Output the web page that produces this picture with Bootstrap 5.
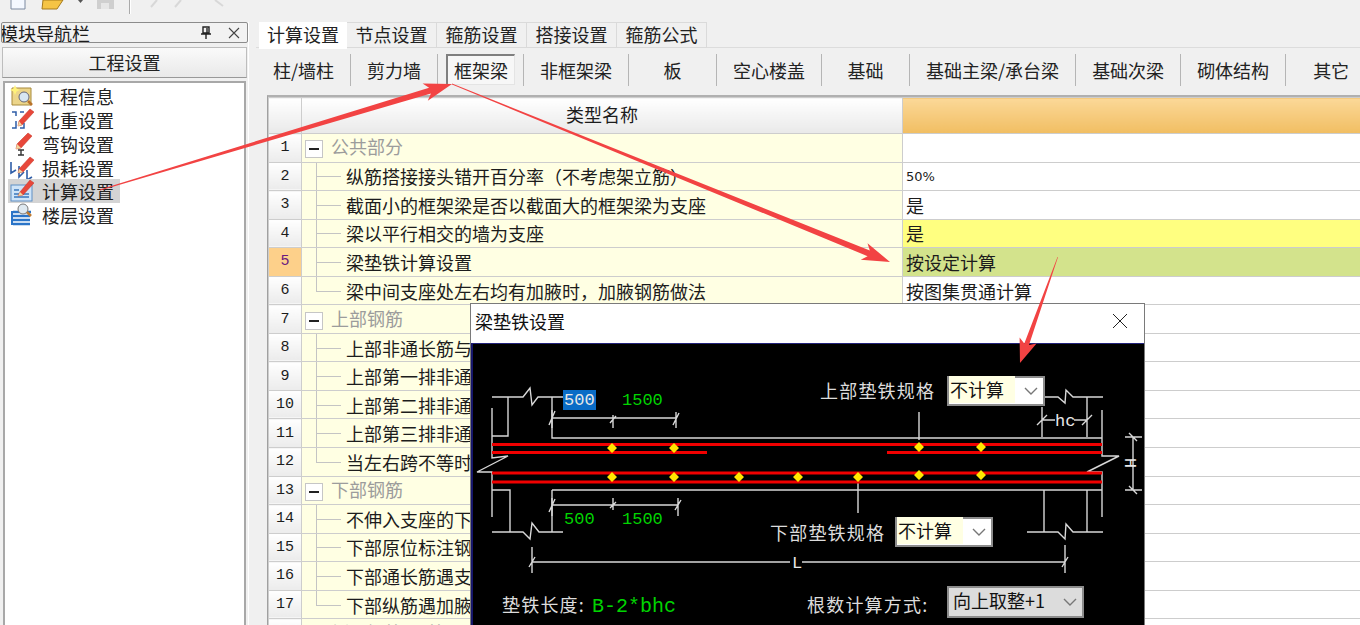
<!DOCTYPE html>
<html lang="zh-CN">
<head>
<meta charset="utf-8">
<title>梁垫铁设置</title>
<link href="https://cdn.jsdelivr.net/npm/bootstrap@5.3.0/dist/css/bootstrap.min.css" rel="stylesheet">
<style>
html,body{height:625px;overflow:hidden}
body{background:#f0f0f0;color:#1c1c1c;font-family:"Noto Sans CJK SC","Liberation Sans",sans-serif;font-size:18px;line-height:1;position:relative;width:1360px}
.topbar{height:22px;padding-left:10px;gap:13px;overflow:hidden}
.topsep{width:1px;height:14px;background:#aaa;box-shadow:1px 0 0 #fff}
.workarea{height:603px;overflow:hidden}
.sidepane{width:248px;flex:none}
.paneltitle{height:21px;margin:0 0 4px 1px;border:1px solid #8c8c8c;border-radius:2px;background:#f2f2f2;width:247px;padding-right:7px;font-size:18px;overflow:hidden;white-space:nowrap}
.paneltext{margin-left:-2px}
.panelbtn{height:31px;margin:0 0 3px 2px;width:245px;border:1px solid #bdbdbd;border-bottom-color:#999;border-radius:0;background:linear-gradient(#fafafa,#e9e9e9);font-size:18px;color:#222;padding:0}
.modulelist{height:544px;margin-left:3px;width:243px;background:#fff;border:2px solid #a8a8a8;border-bottom:0;padding-top:1px;border-radius:0}
.moduleitem{height:24px;border:0;padding:0 0 0 2px;background:transparent;margin-left:3px;width:112px;gap:8px;font-size:18px;color:#222;border-radius:0}
.moduleitem.active{background:#d4d4d4;color:#222}
.moduleitem svg{flex:none}
.rightpane{width:1112px;padding-left:7px;border-left:1px solid #fff}
.tabstrip{height:26px;border-bottom:1px solid #dcdcdc;gap:0;padding-left:3px;flex-wrap:nowrap;--bs-nav-tabs-border-width:0}
.tabstrip .nav-link{height:26px;width:90px;padding:0 0 2px;margin:0;border:1px solid #dadada;border-left:0;border-radius:0;color:#222;background:#f0f0f0;font-size:18px;display:flex;align-items:center;justify-content:center}
.tabstrip .nav-link.active{width:88px;height:29px;margin-top:-2px;background:#fff;border:0;color:#222;margin-bottom:-1px}
.subtools{height:38px;margin-top:2px;padding-left:1px;overflow:hidden}
.subtools .btn{flex:none;height:32px;min-width:88px;padding:0 16px 1px;background:transparent;border:0;border-right:1px solid #b5b5b5;border-radius:0;font-size:18px;line-height:1;color:#222;white-space:nowrap;margin-top:4px}
.subtools .btn.tight{min-width:87px}
.subtools .btn.pressed{margin:4px 8px 0 8px;min-width:69px;padding:0;width:69px;height:31px;background:#f7f7f7;border:1px solid #e4e4e4;border-top:2px solid #7f7f7f;border-left:2px solid #7f7f7f}
.subtools .spacer{flex:none;width:1px;height:32px;background:#b5b5b5;margin-top:4px}
.subtools .btn:last-child{border-right:0;min-width:90px}
.gridwrap{margin-top:7px;margin-left:11px;border-left:1px solid #a0a0a0;border-top:2px solid #b0b0b0;overflow:hidden;height:530px}
.paramgrid{table-layout:fixed;width:1093px;margin:0;border-collapse:collapse}
.colnum{width:33px}
.colname{width:601px}
.paramgrid td,.paramgrid th{padding:0;border:1px solid #cdcdcd;box-shadow:none;font-weight:400;vertical-align:middle;color:#1c1c1c;white-space:nowrap;overflow:hidden}
.paramgrid tr{height:28.56px}
.paramgrid tr.headrow{height:36px}
.headrow th{background:linear-gradient(#fff,#e9e9e9);text-align:center;font-size:18px;padding-bottom:3px}
.headrow th.valhead{background:linear-gradient(#fbd898,#f1be62)}
.paramgrid td.rownum{background:linear-gradient(#fff,#ebebeb);text-align:center;font-family:"Liberation Mono",monospace;font-size:15px}
.paramgrid td.namecell{background:#ffffe3;position:relative;padding-left:44px}
.paramgrid td.groupcell{padding-left:3px;color:#9c9c9c}
.paramgrid td.valcell{background:#fff;padding-left:3px}
.paramgrid td.valsmall{font-family:"DejaVu Sans",sans-serif;font-size:13px}
.paramgrid td.valyellow{background:#ffff80}
.paramgrid td.valgreen{background:#d3e38c}
.paramgrid tr.currow td.rownum{background:#fdd08a;color:#6a1a80}
.expander{display:inline-flex;width:18px;height:18px;border:1px solid #c6c6c6;background:#fff;align-items:center;justify-content:center;margin-right:8px;vertical-align:middle}
.expander i{display:block;width:10px;height:2px;background:#222}
.leaf::before{content:"";position:absolute;left:14px;top:-1px;bottom:-1px;width:1px;background:#c4c4c4}
.leaf::after{content:"";position:absolute;left:14px;top:50%;width:25px;height:1px;background:#c4c4c4}
.leaf.lastleaf::before{bottom:50%}
.dialogwin{position:absolute;left:470px;top:303px;width:675px;height:322px;background:#fff;border:1px solid #7a7a7a;border-bottom:0;z-index:5;overflow:hidden}
.dlgtitle{height:39px;padding:0 16px 5px 4px;font-size:18px;color:#111}
.dlgbody{position:relative;height:282px;background:#000;border-top:1px solid #22227a;border-left:2px solid #16166a;overflow:hidden}
.diagram{position:absolute;left:0;top:0;display:block}
.diagram text{font-family:"Liberation Mono",monospace;font-size:17px;fill:#00d400}
.diagram text.cjk{font-family:"Noto Sans CJK SC",sans-serif;font-size:18px;fill:#dcdcdc;letter-spacing:1.2px}
.diagram text.wht{fill:#e8e8e8}
.diagram text.formula{font-size:20px}
.pickbox{position:absolute;background:#fff;border:2px solid #8c8c8c;color:#111;font-size:18px;display:flex;align-items:center;justify-content:space-between;padding:0 5px 3px 0}
.pickbox span{background:#ffffe3;padding:2px 11px 2px 1px;line-height:1.25}
.pickbox svg{margin-top:3px}
.pick1{left:474px;top:32px;width:98px;height:30px}
.pick2{left:422px;top:173px;width:98px;height:30px}
.pick3{left:474px;top:242px;width:137px;height:32px;background:#dcdcdc;padding-left:4px}
.pick3 span{background:transparent;padding:0}
.arrows{position:absolute;left:0;top:0;z-index:9;pointer-events:none}
</style>
</head>
<body>
<div class="topbar d-flex align-items-start">
  <svg width="18" height="10"><path d="M1 0V9H15V0" fill="#f4f8ff" stroke="#7d8aa0"/></svg>
  <svg width="24" height="11"><path d="M2 0H22L16 9H1Z" fill="#f5c445" stroke="#a67a1c"/></svg>
  <svg width="5" height="4"><path d="M0 0H5L2.500 3Z" fill="#555"/></svg>
  <svg width="20" height="10"><rect x="1" y="0" width="17" height="9" fill="#cfcfcf"/><rect x="5" y="3" width="8" height="6" fill="#e6e6e6"/></svg>
  <div class="topsep"></div>
  <svg width="100" height="8"><path d="M8 7 14 0M38 0 32 7M72 0 80 6" stroke="#d8d8d8" stroke-width="2" fill="none"/></svg>
</div>
<div class="workarea d-flex">
  <aside class="sidepane">
    <div class="paneltitle d-flex align-items-center justify-content-between">
      <span class="paneltext">模块导航栏</span>
      <span class="d-flex align-items-center gap-3">
        <svg width="12" height="14" viewBox="0 0 12 14"><path d="M3 1H9V7H3ZM1 8H11M6 8V13M7 2V7" stroke="#222" stroke-width="1.400" fill="none"/></svg>
        <svg width="12" height="12" viewBox="0 0 12 12"><path d="M1 1 11 11M11 1 1 11" stroke="#444" stroke-width="1.100"/></svg>
      </span>
    </div>
    <button class="btn panelbtn d-block" type="button">工程设置</button>
    <div class="list-group modulelist">
      <a class="list-group-item moduleitem d-flex align-items-center">
        <svg width="24" height="24" viewBox="0 0 24 24"><path d="M2 4H21V21H2Z" fill="#ecd58a" stroke="#a88a3c"/><path d="M5 1 6.500 4.500 10 6 6.500 7.500 5 11 3.500 7.500 0 6 3.500 4.500Z" fill="#fff27a"/><circle cx="14" cy="13" r="5" fill="#d7e6f2" stroke="#667"/><path d="M18 17 22 21" stroke="#b9722a" stroke-width="2.500"/></svg>工程信息</a>
      <a class="list-group-item moduleitem d-flex align-items-center">
        <svg width="24" height="24" viewBox="0 0 24 24"><path d="M2 4H6V8M6 13V20H2M14 4H10M10 20H14V15" fill="none" stroke="#2f5ea8" stroke-width="1.500"/><path d="M9 13 20 1 24 4 12 17 8 18Z" fill="#e8473a" stroke="#c33020" stroke-width=".5"/><path d="M9 13 12 17 8 18Z" fill="#f2d9a0"/></svg>比重设置</a>
      <a class="list-group-item moduleitem d-flex align-items-center">
        <svg width="24" height="24" viewBox="0 0 24 24"><path d="M8 18H14M11 18V23M8 23H14" fill="none" stroke="#333" stroke-width="1.400"/><path d="M7 12 18 1 22 4 11 16 6 17Z" fill="#e8473a" stroke="#c33020" stroke-width=".5"/><path d="M7 12 11 16 6 17Z" fill="#f2d9a0"/></svg>弯钩设置</a>
      <a class="list-group-item moduleitem d-flex align-items-center">
        <svg width="24" height="24" viewBox="0 0 24 24"><path d="M1 6V17L6 14M9 10V21L14 16M17 14V24L22 21" fill="none" stroke="#2f5ea8" stroke-width="1.600"/><path d="M9 13 20 1 24 4 13 16 8 17Z" fill="#e8473a" stroke="#c33020" stroke-width=".5"/><path d="M9 13 13 16 8 17Z" fill="#f2d9a0"/></svg>损耗设置</a>
      <a class="list-group-item moduleitem active d-flex align-items-center">
        <svg width="24" height="24" viewBox="0 0 24 24"><rect x="1" y="6" width="21" height="16" fill="#cfe4f8" stroke="#5f8fc4"/><path d="M4 11H9M4 15H19M4 18H19" stroke="#3b77bb" stroke-width="1.300"/><path d="M10 13 20 1 24 4 13 16 8 17Z" fill="#e8473a" stroke="#c33020" stroke-width=".5"/><path d="M10 13 13 16 8 17Z" fill="#f2d9a0"/></svg>计算设置</a>
      <a class="list-group-item moduleitem d-flex align-items-center">
        <svg width="24" height="24" viewBox="0 0 24 24"><path d="M3 9H21M2 13H20M2 17H20M3 21H20" stroke="#2a74c8" stroke-width="2.600"/><path d="M2 8V22" stroke="#2a74c8" stroke-width="2"/><circle cx="13" cy="6" r="5" fill="#dfe9f0" stroke="#777"/><path d="M17 9 21 13" stroke="#c07a30" stroke-width="2.500"/></svg>楼层设置</a>
    </div>
  </aside>
  <section class="rightpane">
    <ul class="nav nav-tabs tabstrip">
      <li class="nav-item"><a class="nav-link active">计算设置</a></li>
      <li class="nav-item"><a class="nav-link">节点设置</a></li>
      <li class="nav-item"><a class="nav-link">箍筋设置</a></li>
      <li class="nav-item"><a class="nav-link">搭接设置</a></li>
      <li class="nav-item"><a class="nav-link">箍筋公式</a></li>
    </ul>
    <div class="subtools d-flex align-items-start">
      <button class="btn" type="button">柱/墙柱</button>
      <button class="btn tight" type="button">剪力墙</button>
      <button class="btn pressed" type="button">框架梁</button>
      <div class="spacer"></div>
      <button class="btn" type="button">非框架梁</button>
      <button class="btn" type="button">板</button>
      <button class="btn" type="button">空心楼盖</button>
      <button class="btn" type="button">基础</button>
      <button class="btn" type="button">基础主梁/承台梁</button>
      <button class="btn" type="button">基础次梁</button>
      <button class="btn" type="button">砌体结构</button>
      <button class="btn" type="button">其它</button>
    </div>
    <div class="gridwrap">
      <table class="table paramgrid">
        <colgroup><col class="colnum"><col class="colname"><col></colgroup>
        <tr class="headrow"><th></th><th>类型名称</th><th class="valhead"></th></tr>
        <tr><td class="rownum">1</td><td class="namecell groupcell"><span class="expander"><i></i></span>公共部分</td><td class="valcell"></td></tr>
        <tr><td class="rownum">2</td><td class="namecell leaf">纵筋搭接接头错开百分率（不考虑架立筋）</td><td class="valcell valsmall">50%</td></tr>
        <tr><td class="rownum">3</td><td class="namecell leaf">截面小的框架梁是否以截面大的框架梁为支座</td><td class="valcell">是</td></tr>
        <tr><td class="rownum">4</td><td class="namecell leaf">梁以平行相交的墙为支座</td><td class="valcell valyellow">是</td></tr>
        <tr class="currow"><td class="rownum">5</td><td class="namecell leaf">梁垫铁计算设置</td><td class="valcell valgreen">按设定计算</td></tr>
        <tr><td class="rownum">6</td><td class="namecell leaf lastleaf">梁中间支座处左右均有加腋时，加腋钢筋做法</td><td class="valcell">按图集贯通计算</td></tr>
        <tr><td class="rownum">7</td><td class="namecell groupcell"><span class="expander"><i></i></span>上部钢筋</td><td class="valcell"></td></tr>
        <tr><td class="rownum">8</td><td class="namecell leaf">上部非通长筋与架立钢筋的搭接长度</td><td class="valcell"></td></tr>
        <tr><td class="rownum">9</td><td class="namecell leaf">上部第一排非通长筋伸出长度</td><td class="valcell"></td></tr>
        <tr><td class="rownum">10</td><td class="namecell leaf">上部第二排非通长筋伸出长度</td><td class="valcell"></td></tr>
        <tr><td class="rownum">11</td><td class="namecell leaf">上部第三排非通长筋伸出长度</td><td class="valcell"></td></tr>
        <tr><td class="rownum">12</td><td class="namecell leaf lastleaf">当左右跨不等时，伸入小跨内的长度</td><td class="valcell"></td></tr>
        <tr><td class="rownum">13</td><td class="namecell groupcell"><span class="expander"><i></i></span>下部钢筋</td><td class="valcell"></td></tr>
        <tr><td class="rownum">14</td><td class="namecell leaf">不伸入支座的下部钢筋距支座边的距离</td><td class="valcell"></td></tr>
        <tr><td class="rownum">15</td><td class="namecell leaf">下部原位标注钢筋做法</td><td class="valcell"></td></tr>
        <tr><td class="rownum">16</td><td class="namecell leaf">下部通长筋遇支座做法</td><td class="valcell"></td></tr>
        <tr><td class="rownum">17</td><td class="namecell leaf lastleaf">下部纵筋遇加腋做法</td><td class="valcell"></td></tr>
        <tr><td class="rownum">18</td><td class="namecell groupcell"><span class="expander"><i></i></span>侧面钢筋/吊筋</td><td class="valcell"></td></tr>
      </table>
    </div>
  </section>
</div>

<div class="dialogwin">
  <div class="dlgtitle d-flex align-items-center justify-content-between">
    <span>梁垫铁设置</span>
    <svg width="16" height="16" viewBox="0 0 16 16"><path d="M1 1 15 15M15 1 1 15" stroke="#222" stroke-width="1"/></svg>
  </div>
  <div class="dlgbody">
    <svg class="diagram" width="672" height="282" viewBox="473 344 672 282">
      <g fill="none" stroke="#d8d8d8" stroke-width="1.400">
        <path d="M492 397H523L530 388 532 405 538 397H564M508 397V436H492M492 408V458L508 456 477 472H492V517"/>
        <path d="M552 397V438H1102M552 490H1102M492 490H510V532M552 490V532M492 532H523L530 539 532 523 539 532H563M510 532H492"/>
        <path d="M552 418H676M552 410V428M613 415V428M676 412V428M549 425 555 411M610 423 616 416M673 425 679 413"/>
        <path d="M552 505H678M552 498V516M613 498V510M678 498V516M549 512 555 499M610 508 616 502M675 510 681 500"/>
        <path d="M532 562H790M802 562H1065M532 547V573M1065 545V573M529 567 535 557M1062 567 1068 557"/>
        <path d="M919 412V440M858 480V513"/>
        <path d="M1044 397H1058L1065 403 1066 390 1073 397H1103M1087 397V437M1042 407V437M1042 420H1055M1074 420H1087M1037 425 1047 415M1082 425 1092 415"/>
        <path d="M1102 410V456H1119L1087 472H1102V517M1044 490V532M1087 490V532M1027 532H1058L1065 539 1066 524 1073 532H1103"/>
        <path d="M1133 437V490M1125 437H1142M1125 490H1142M1129 433 1137 441M1129 486 1137 494"/>
      </g>
      <g stroke="#f00000" stroke-width="3">
        <path d="M492 444.500H1102M492 452.500H707M887 452.500H1102M492 473H1102M492 482H1102"/>
      </g>
      <g fill="#ffe600">
        <path d="M612 443 617 448 612 453 607 448ZM674 443 679 448 674 453 669 448ZM919 442 924 447 919 452 914 447ZM981 442 986 447 981 452 976 447Z"/>
        <path d="M612 472 617 477 612 482 607 477ZM674 472 679 477 674 482 669 477ZM739 472 744 477 739 482 734 477ZM798 472 803 477 798 482 793 477ZM858 472 863 477 858 482 853 477ZM919 470 924 475 919 480 914 475ZM981 470 986 475 981 480 976 475Z"/>
      </g>
      <rect x="563" y="390" width="33" height="20" fill="#0a6cc6"/>
      <text class="wht" x="564" y="405">500</text>
      <text x="622" y="405">1500</text>
      <text x="564" y="524">500</text>
      <text x="622" y="524">1500</text>
      <text class="wht" x="792" y="568">L</text>
      <text class="wht" x="1055" y="426">hc</text>
      <text class="wht" transform="translate(1136 468) rotate(-90)">H</text>
      <text class="cjk" x="820" y="398">上部垫铁规格</text>
      <text class="cjk" x="770" y="540">下部垫铁规格</text>
      <text class="cjk" x="502" y="612">垫铁长度:</text>
      <text class="formula" x="592" y="612">B-2*bhc</text>
      <text class="cjk" x="807" y="612">根数计算方式:</text>
    </svg>
    <div class="pickbox pick1"><span>不计算</span><svg width="14" height="9" viewBox="0 0 14 9"><path d="M1 1 7 7 13 1" fill="none" stroke="#777" stroke-width="1.400"/></svg></div>
    <div class="pickbox pick2"><span>不计算</span><svg width="14" height="9" viewBox="0 0 14 9"><path d="M1 1 7 7 13 1" fill="none" stroke="#777" stroke-width="1.400"/></svg></div>
    <div class="pickbox pick3"><span>向上取整+1</span><svg width="14" height="9" viewBox="0 0 14 9"><path d="M1 1 7 7 13 1" fill="none" stroke="#777" stroke-width="1.400"/></svg></div>
  </div>
</div>

<svg class="arrows" width="1360" height="625">
  <g fill="#f24343">
    <polygon points="99.900,189.500 429.100,87.700 422.600,83.500 452,84 427.800,100.700 430.900,93.500 100.100,190.500"/>
    <polygon points="452,83.500 869.800,250.600 867.500,243.200 890,262 860.700,259.800 867.600,256.200 452,84.500"/>
    <polygon points="1058,257 1029,345 1036.600,343.400 1020,363 1019.600,337.400 1024.300,343.400 1057.500,257"/>
  </g>
</svg>
</body>
</html>
